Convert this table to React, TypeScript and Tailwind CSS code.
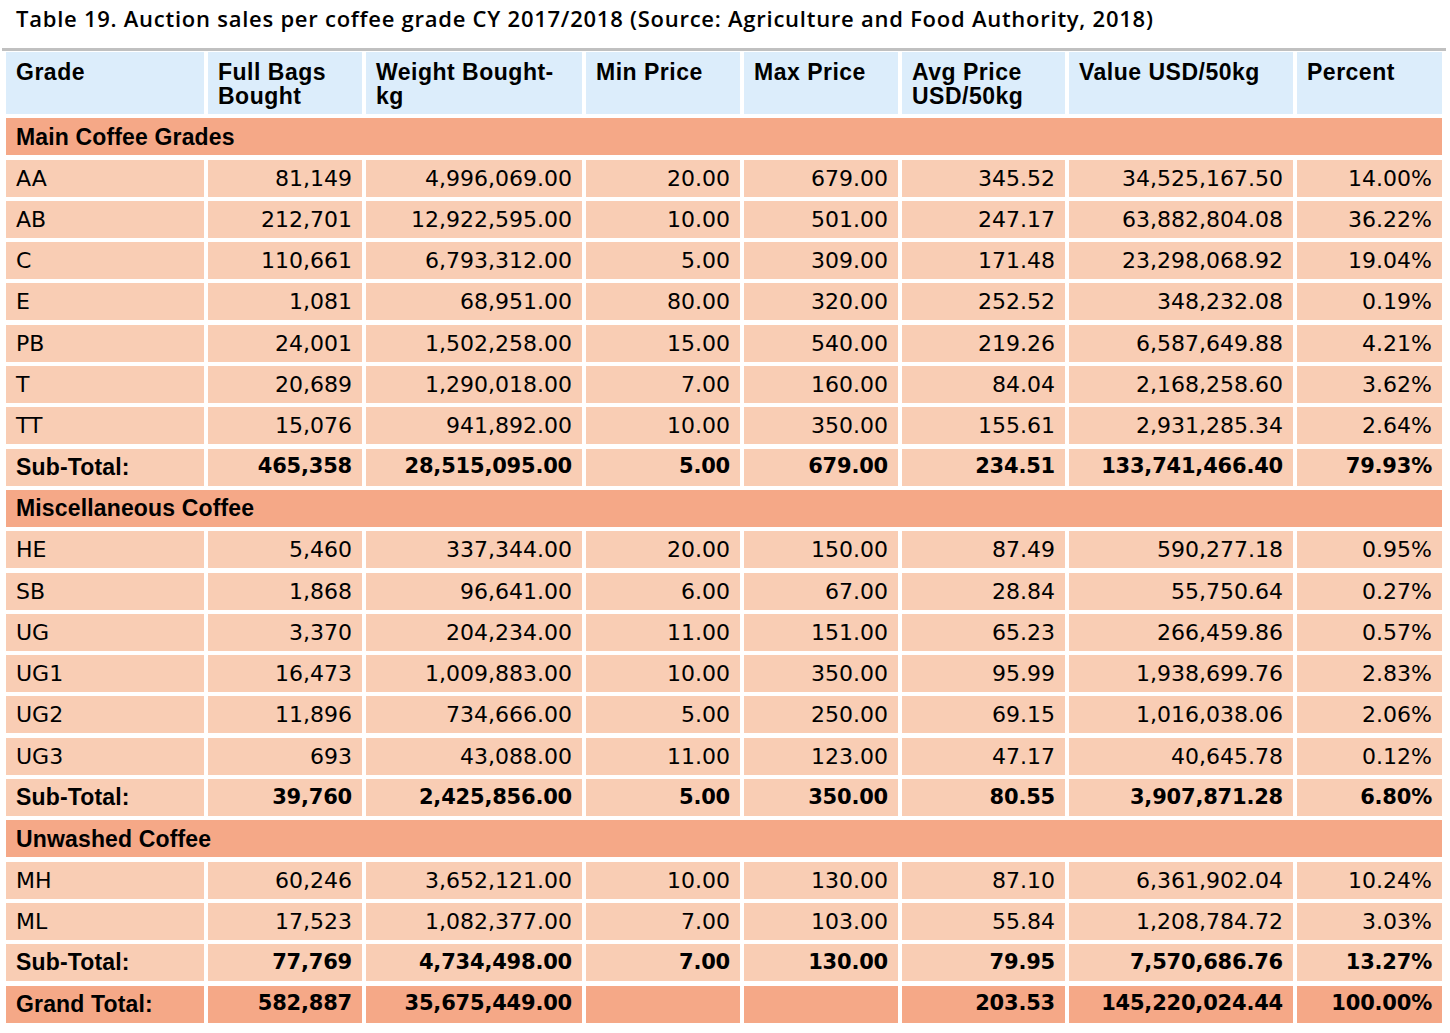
import React from 'react';

type Row = string[];

const mainRows: Row[] = [
  ['AA', '81,149', '4,996,069.00', '20.00', '679.00', '345.52', '34,525,167.50', '14.00%'],
  ['AB', '212,701', '12,922,595.00', '10.00', '501.00', '247.17', '63,882,804.08', '36.22%'],
  ['C', '110,661', '6,793,312.00', '5.00', '309.00', '171.48', '23,298,068.92', '19.04%'],
  ['E', '1,081', '68,951.00', '80.00', '320.00', '252.52', '348,232.08', '0.19%'],
  ['PB', '24,001', '1,502,258.00', '15.00', '540.00', '219.26', '6,587,649.88', '4.21%'],
  ['T', '20,689', '1,290,018.00', '7.00', '160.00', '84.04', '2,168,258.60', '3.62%'],
  ['TT', '15,076', '941,892.00', '10.00', '350.00', '155.61', '2,931,285.34', '2.64%'],
];
const miscRows: Row[] = [
  ['HE', '5,460', '337,344.00', '20.00', '150.00', '87.49', '590,277.18', '0.95%'],
  ['SB', '1,868', '96,641.00', '6.00', '67.00', '28.84', '55,750.64', '0.27%'],
  ['UG', '3,370', '204,234.00', '11.00', '151.00', '65.23', '266,459.86', '0.57%'],
  ['UG1', '16,473', '1,009,883.00', '10.00', '350.00', '95.99', '1,938,699.76', '2.83%'],
  ['UG2', '11,896', '734,666.00', '5.00', '250.00', '69.15', '1,016,038.06', '2.06%'],
  ['UG3', '693', '43,088.00', '11.00', '123.00', '47.17', '40,645.78', '0.12%'],
];
const unwashedRows: Row[] = [
  ['MH', '60,246', '3,652,121.00', '10.00', '130.00', '87.10', '6,361,902.04', '10.24%'],
  ['ML', '17,523', '1,082,377.00', '7.00', '103.00', '55.84', '1,208,784.72', '3.03%'],
];

const sections: { title: string; rows: Row[]; subtotal: Row }[] = [
  {
    title: 'Main Coffee Grades',
    rows: mainRows,
    subtotal: ['Sub-Total:', '465,358', '28,515,095.00', '5.00', '679.00', '234.51', '133,741,466.40', '79.93%'],
  },
  {
    title: 'Miscellaneous Coffee',
    rows: miscRows,
    subtotal: ['Sub-Total:', '39,760', '2,425,856.00', '5.00', '350.00', '80.55', '3,907,871.28', '6.80%'],
  },
  {
    title: 'Unwashed Coffee',
    rows: unwashedRows,
    subtotal: ['Sub-Total:', '77,769', '4,734,498.00', '7.00', '130.00', '79.95', '7,570,686.76', '13.27%'],
  },
];

const grandTotal: Row = ['Grand Total:', '582,887', '35,675,449.00', '', '', '203.53', '145,220,024.44', '100.00%'];

const headers: React.ReactNode[] = [
  'Grade',
  <>Full Bags<br />Bought</>,
  <>Weight Bought-<br />kg</>,
  'Min Price',
  'Max Price',
  <>Avg Price<br />USD/50kg</>,
  'Value USD/50kg',
  'Percent',
];

const labelBold = "font-['Liberation_Sans',Arial,sans-serif] font-bold text-[23px] tracking-[0.15px]";
const headBold = "font-['Liberation_Sans',Arial,sans-serif] font-bold text-[23px] tracking-[0.5px]";
const numBold = "font-['DejaVu_Sans',sans-serif] font-bold text-[21px] tracking-[-0.2px]";
const plain = "font-['DejaVu_Sans',sans-serif] text-[22px]";

const DataRow = ({ row, bold = false, bg = 'bg-[#f9cdb4]' }: { row: Row; bold?: boolean; bg?: string }) => (
  <>
    {row.map((v, i) => (
      <div
        key={i}
        className={`${bg} h-[37px] flex items-center px-[10px] ${i === 0 ? 'justify-start' : 'justify-end'} ${
          bold ? (i === 0 ? labelBold : numBold) : plain
        }`}
      >
        {v}
      </div>
    ))}
  </>
);

export default function App() {
  return (
    <div className="w-[1450px] h-[1033px] bg-white text-black overflow-hidden">
      <div className="h-[48px] pl-[16px] pt-[4px] font-['Open_Sans',sans-serif] font-semibold text-[22px] leading-[28px] tracking-[0.75px] whitespace-nowrap">
        Table 19. Auction sales per coffee grade CY 2017/2018 (Source: Agriculture and Food Authority, 2018)
      </div>
      <div className="ml-[2px] w-[1444px] border-t-[3px] border-[#c0c0c0] pt-[1px] pl-[4px]">
        <div className="grid grid-cols-[198px_154px_216px_154px_154px_163px_224px_145px] gap-x-[4px] gap-y-[4.3px]">
          {headers.map((h, i) => (
            <div key={i} className={`bg-[#dcedfb] h-[62px] px-[10px] pt-[8px] leading-[24px] ${headBold}`}>
              {h}
            </div>
          ))}
          {sections.map((s) => (
            <React.Fragment key={s.title}>
              <div className={`col-span-8 bg-[#f5a887] h-[37px] flex items-center px-[10px] ${labelBold}`}>
                {s.title}
              </div>
              {s.rows.map((r) => (
                <DataRow key={r[0]} row={r} />
              ))}
              <DataRow row={s.subtotal} bold />
            </React.Fragment>
          ))}
          <DataRow row={grandTotal} bold bg="bg-[#f5a887]" />
        </div>
      </div>
    </div>
  );
}
